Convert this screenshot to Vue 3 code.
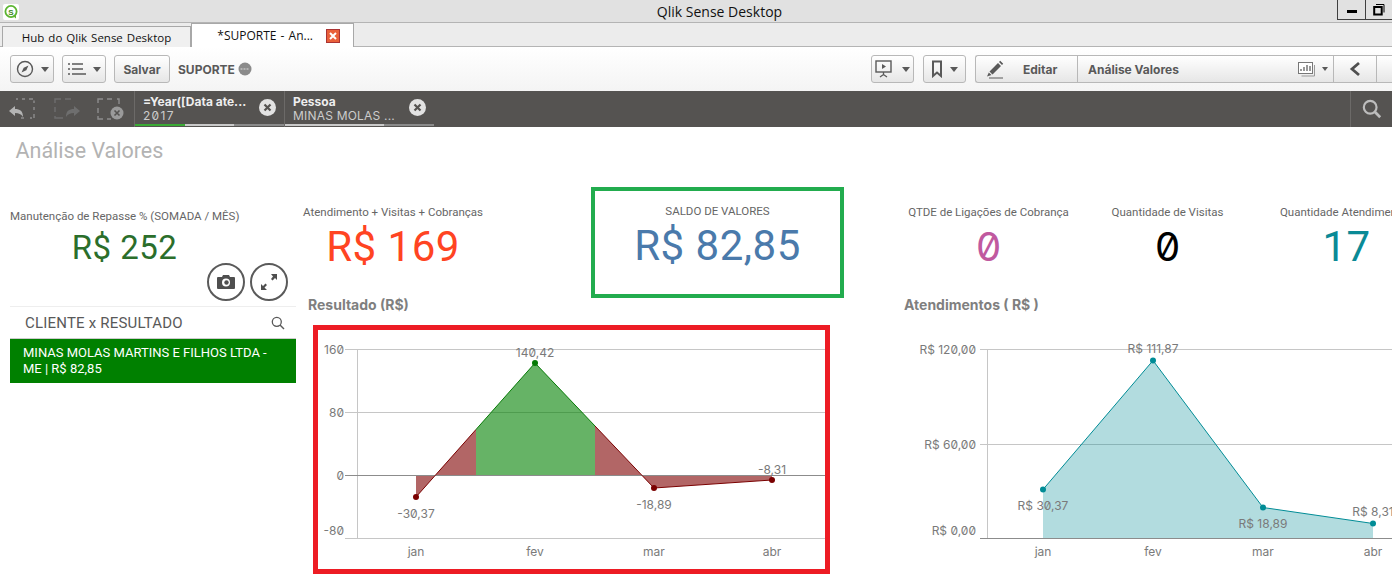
<script setup>
const tabs = [
  { label: 'Hub do Qlik Sense Desktop' },
]
const selections = [
  { name: '=Year([Data ate...', value: '2017', segs: ['#3aaa35', '#c9c9c9', '#8a8a8a'] },
  { name: 'Pessoa', value: 'MINAS MOLAS ...', segs: ['#c9c9c9', '#c9c9c9', '#8a8a8a'] },
]
const months = ['jan', 'fev', 'mar', 'abr']
const res = [
  { x: 416, y: 497, c: '#7a0000', l: '-30,37', lx: 416, ly: 518 },
  { x: 535, y: 363, c: '#067a06', l: '140,42', lx: 535, ly: 357 },
  { x: 654, y: 488, c: '#7a0000', l: '-18,89', lx: 654, ly: 509 },
  { x: 772, y: 480, c: '#7a0000', l: '-8,31', lx: 772, ly: 474 },
]
const atd = [
  { x: 1043, y: 489.5, l: 'R$ 30,37', ly: 510 },
  { x: 1153, y: 360.5, l: 'R$ 111,87', ly: 353 },
  { x: 1263, y: 507.5, l: 'R$ 18,89', ly: 528 },
  { x: 1373, y: 523.5, l: 'R$ 8,31', ly: 516 },
]
</script>

<template>
  <div class="app">
    <header class="titlebar">
      <svg class="logo" width="16" height="16" viewBox="0 0 16 16"><rect width="16" height="16" rx="2" fill="#fff"/><circle cx="8" cy="7.5" r="5.6" fill="none" stroke="#5cb531" stroke-width="1.8"/><path d="M10 12l3 2.5v-4z" fill="#5cb531"/><text x="8" y="10.5" font-size="8" font-weight="700" text-anchor="middle" fill="#3c8a1e" font-family="Liberation Sans">S</text></svg>
      <span class="wintitle">Qlik Sense Desktop</span>
      <div class="winbtns">
        <button class="winbtn"><span class="minbar"></span></button>
        <button class="winbtn"><svg width="12" height="12" viewBox="0 0 12 12"><path d="M3 .5h8v8" fill="none" stroke="#000"/><rect x="1.2" y="3" width="7.5" height="7.5" fill="none" stroke="#000" stroke-width="2"/></svg></button>
      </div>
    </header>

    <nav class="tabstrip">
      <div v-for="t in tabs" :key="t.label" class="tab">{{ t.label }}</div>
      <div class="tab active">
        <span>*SUPORTE - An...</span>
        <span class="tabclose"><svg width="12" height="12" viewBox="0 0 12 12"><path d="M3 3l6 6M9 3l-6 6" stroke="#fff" stroke-width="2"/></svg></span>
      </div>
    </nav>

    <div class="toolbar">
      <button class="tbtn w44">
        <svg width="18" height="18" viewBox="0 0 18 18"><circle cx="9" cy="9" r="7.5" fill="none" stroke="#595959" stroke-width="1.4"/><path d="M12.5 5.5L10.3 10.3 5.5 12.5 7.7 7.7z" fill="#595959"/></svg>
        <i class="caret"></i>
      </button>
      <button class="tbtn w44">
        <svg width="18" height="14" viewBox="0 0 18 14"><path d="M0 2h2M4 2h11M0 7h2M4 7h11M0 12h2M4 12h14" stroke="#595959" stroke-width="1.6"/></svg>
        <i class="caret"></i>
      </button>
      <button class="tbtn save">Salvar</button>
      <span class="appname">SUPORTE</span>
      <svg class="status" width="14" height="14" viewBox="0 0 14 14"><circle cx="7" cy="7" r="6.5" fill="#8b8b8b"/><path d="M2.5 7h9" stroke="#dcdcdc" stroke-width="1" stroke-dasharray="2 1"/></svg>

      <div class="spacer"></div>

      <button class="tbtn rb">
        <svg width="20" height="18" viewBox="0 0 20 18"><rect x="1" y="1" width="15" height="11" fill="none" stroke="#595959" stroke-width="1.4"/><path d="M7 4l4 2.5L7 9z" fill="#595959"/><path d="M8.500 12v3M5 17l3.500-2.500L12 17" fill="none" stroke="#595959" stroke-width="1.3"/></svg>
        <i class="caret"></i>
      </button>
      <button class="tbtn rb">
        <svg width="12" height="18" viewBox="0 0 12 18"><path d="M2 1.500h8V16L6 12.500 2 16z" fill="none" stroke="#595959" stroke-width="2"/></svg>
        <i class="caret"></i>
      </button>
      <div class="segments">
        <button class="seg edit">
          <svg width="18" height="19" viewBox="0 0 18 19"><path d="M3.500 11.500L12 3l3 3-8.500 8.500zM13 2l1.200-1.200 3 3L16 5zM2.800 12.500L1 16.500l4.500-1.500z" fill="#595959"/><path d="M3 18h14" stroke="#595959" stroke-width="1"/></svg>
          <span>Editar</span>
        </button>
        <button class="seg sheetsel">
          <span>Análise Valores</span>
          <span class="sheeticon">
            <svg width="18" height="15" viewBox="0 0 18 15"><rect x=".5" y=".5" width="14" height="11" fill="#fff" stroke="#777"/><path d="M3 9V7M6 9V5M9 9V3M12 9V4" stroke="#777" stroke-width="1.500"/><path d="M16.500 3v11h-13" fill="none" stroke="#999"/></svg>
            <i class="caret small"></i>
          </span>
        </button>
        <button class="seg prev"><svg width="12" height="16" viewBox="0 0 12 16"><path d="M10 2L3 8l7 6" fill="none" stroke="#4f4f4f" stroke-width="2.800"/></svg></button>
        <button class="seg next"></button>
      </div>
    </div>

    <div class="selbar">
      <div class="selactions">
        <svg width="28" height="22" viewBox="0 0 28 22"><path d="M8 1h2M14 1h3M21 1h4a1 1 0 0 1 1 1v3M26 9v3M26 16v4h-4M16 20h-3" stroke="#8d8d8d" stroke-width="1.4" fill="none" stroke-dasharray="4 2"/><path d="M1 13l6-5v3c5 0 8 2 8 8-2-3-4-4-8-4v3z" fill="#b4b4b4"/></svg>
        <svg width="28" height="22" viewBox="0 0 28 22"><path d="M2 5V1h6M12 1h6M2 9v5M2 18v2h8" stroke="#6e6e6e" stroke-width="1.400" fill="none"/><path d="M27 13l-6-5v3c-5 0-8 2-8 8 2-3 4-4 8-4v3z" fill="#6e6e6e"/></svg>
        <svg width="28" height="22" viewBox="0 0 28 22"><path d="M1 5V1h5M10 1h5M20 1h2v5M1 10v5M1 18v3h5M10 21h4" stroke="#8d8d8d" stroke-width="1.400" fill="none"/><circle cx="20" cy="15" r="6.500" fill="#9a9a9a"/><path d="M17.500 12.500l5 5M22.500 12.500l-5 5" stroke="#555351" stroke-width="1.600"/></svg>
      </div>
      <div v-for="s in selections" :key="s.name" class="selitem">
        <div class="seltext">
          <strong>{{ s.name }}</strong>
          <span class="mono">{{ s.value }}</span>
        </div>
        <span class="selclose"><svg width="17" height="17" viewBox="0 0 17 17"><circle cx="8.500" cy="8.500" r="8.500" fill="#e2e2e2"/><path d="M5.500 5.500l6 6M11.500 5.500l-6 6" stroke="#555351" stroke-width="2.200"/></svg></span>
        <div class="selprog"><i v-for="(c, i) in s.segs" :key="i" :style="{ background: c }"></i></div>
      </div>
      <div class="spacer"></div>
      <div class="selsearch">
        <svg width="20" height="20" viewBox="0 0 22 22"><circle cx="9" cy="9" r="7" fill="none" stroke="#bdbdbd" stroke-width="2.400"/><path d="M14 14l6 6" stroke="#bdbdbd" stroke-width="3"/></svg>
      </div>
    </div>

    <main class="sheet">
      <h1 class="sheettitle">Análise Valores</h1>
      <div class="board">
        <section class="left">
          <div class="kpi k-left">
            <div class="kpilabel">Manutenção de Repasse % (SOMADA / MÊS)</div>
            <div class="kpival v-small" style="color:#2b6e2b">R$ 252</div>
          </div>
          <div class="roundbtns">
            <button class="round"><svg width="18" height="14" viewBox="0 0 18 14"><path d="M1 2h4l1-2h6l1 2h4a1 1 0 0 1 1 1v10a1 1 0 0 1-1 1H1a1 1 0 0 1-1-1V3a1 1 0 0 1 1-1z" fill="#4f4f4f"/><circle cx="9" cy="7.500" r="4" fill="#fff"/><circle cx="9.500" cy="7.500" r="2.200" fill="#4f4f4f"/></svg></button>
            <button class="round"><svg width="18" height="18" viewBox="0 0 18 18"><path d="M11 1h6v6l-2-2-2.500 2.500-1.500-1.500L13 3.500zM7 17H1v-6l2 2 2.500-2.500L7 12l-2.500 2.500z" fill="#4f4f4f"/></svg></button>
          </div>
          <div class="listbox">
            <div class="listhead">
              <span>CLIENTE x RESULTADO</span>
              <svg width="14" height="14" viewBox="0 0 14 14"><circle cx="5.800" cy="5.800" r="4.500" fill="none" stroke="#595959" stroke-width="1.300"/><path d="M9 9l4 4" stroke="#595959" stroke-width="1.500"/></svg>
            </div>
            <div class="listrow">MINAS MOLAS MARTINS E FILHOS LTDA - ME | R$ 82,85</div>
          </div>
        </section>

        <section class="mid">
          <div class="midkpis">
            <div class="kpi k-atd">
              <div class="kpilabel">Atendimento + Visitas + Cobranças</div>
              <div class="kpival" style="color:#ff4422">R$ 169</div>
            </div>
            <div class="kpi k-saldo">
              <div class="kpilabel">SALDO DE VALORES</div>
              <div class="kpival" style="color:#4a7aab">R$ 82,85</div>
            </div>
          </div>
          <h2 class="charttitle t-res">Resultado (R$)</h2>
          <div class="redframe">
            <svg width="507" height="239" viewBox="318 330 507 239" class="chart">
              <g stroke="#c6c6c6" stroke-width="1">
                <path d="M345 349.500H825M345 412.500H825M345 538.500H825M357.500 349V538"/>
              </g>
              <text class="ax" x="344" y="354" text-anchor="end">160</text>
              <text class="ax" x="344" y="417" text-anchor="end">80</text>
              <text class="ax" x="344" y="480" text-anchor="end">0</text>
              <text class="ax" x="344" y="535" text-anchor="end">-80</text>
              <path d="M416 475V497L435.500 475ZM476 475V429.500L435.500 475ZM595 475V426L641.500 475ZM641.500 475L654 488 772 480V475Z" fill="#7f0000" fill-opacity=".6"/>
              <path d="M476 475V429.500L535 363 595 426V475Z" fill="#008000" fill-opacity=".6"/>
              <path d="M345 475.500H825" stroke="#8c8c8c" stroke-width="1"/>
              <path d="M416 497L476 429.500" stroke="#7a0000" fill="none"/>
              <path d="M476 429.500L535 363 595 426" stroke="#067a06" fill="none"/>
              <path d="M595 426L654 488 772 480" stroke="#7a0000" fill="none"/>
              <g v-for="p in res" :key="p.l">
                <circle :cx="p.x" :cy="p.y" r="3" :fill="p.c"/>
                <text class="ax" :x="p.lx" :y="p.ly" text-anchor="middle">{{ p.l }}</text>
              </g>
              <text v-for="(m, i) in months" :key="m" class="ax" :x="res[i].x" y="556" text-anchor="middle">{{ m }}</text>
            </svg>
          </div>
        </section>

        <section class="right">
          <div class="rightkpis">
            <div class="kpi k-r">
              <div class="kpilabel">QTDE de Ligações de Cobrança</div>
              <div class="kpival zero" style="color:#c0599f">0</div>
            </div>
            <div class="kpi k-r">
              <div class="kpilabel">Quantidade de Visitas</div>
              <div class="kpival zero" style="color:#000">0</div>
            </div>
            <div class="kpi k-r">
              <div class="kpilabel">Quantidade Atendimentos</div>
              <div class="kpival" style="color:#0a8a96">17</div>
            </div>
          </div>
          <h2 class="charttitle t-atd">Atendimentos ( R$ )</h2>
          <svg width="502" height="249" viewBox="890 325 502 249" class="chart">
            <path d="M980 349.500H1392M980 444.500H1392M987.500 349V538" stroke="#c6c6c6" fill="none"/>
            <text class="ax" x="976" y="354" text-anchor="end">R$ 120,00</text>
            <text class="ax" x="976" y="449" text-anchor="end">R$ 60,00</text>
            <text class="ax" x="976" y="535" text-anchor="end">R$ 0,00</text>
            <path d="M1043 538V489.500L1153 360.500 1263 507.500 1373 523.500V538Z" fill="#008c96" fill-opacity=".3"/>
            <path d="M980 538.500H1392" stroke="#8c8c8c"/>
            <path d="M1043 489.500L1153 360.500 1263 507.500 1373 523.500" stroke="#008c96" fill="none"/>
            <g v-for="p in atd" :key="p.l">
              <circle :cx="p.x" :cy="p.y" r="3" fill="#008c96"/>
              <text class="ax" :x="p.x" :y="p.ly" text-anchor="middle">{{ p.l }}</text>
            </g>
            <text v-for="(m, i) in months" :key="m" class="ax" :x="atd[i].x" y="556" text-anchor="middle">{{ m }}</text>
          </svg>
        </section>
      </div>
    </main>
  </div>
</template>

<style>
html, body { margin: 0; overflow: hidden; background: #fff; }
</style>

<style scoped>
.app { width: 1392px; height: 574px; overflow: hidden; display: flex; flex-direction: column; font-family: Inter, "Noto Sans", sans-serif; font-feature-settings: "zero"; color: #595959; background: #fff; }
button { font: inherit; padding: 0; background: none; border: 0; color: inherit; }
h1, h2 { margin: 0; }
.spacer { flex: 1; }

.titlebar { height: 22px; border-bottom: 1px solid #b4b4b4; background: #e1e1e1; display: flex; align-items: flex-start; justify-content: center; position: relative; box-sizing: content-box; }
.logo { position: absolute; left: 3px; top: 4px; }
.wintitle { font: 14px/24px "Open Sans", sans-serif; color: #111; margin-left: 47px; }
.winbtns { position: absolute; right: 0; top: 0; display: flex; height: 19px; border: 1px solid #404040; border-top: 0; border-right: 0; }
.winbtn { width: 27px; display: flex; align-items: center; justify-content: center; }
.winbtn + .winbtn { border-left: 1px solid #404040; }
.minbar { width: 10px; height: 3px; background: #000; margin-top: 4px; }

.tabstrip { height: 23px; background: #ececec; border-bottom: 1px solid #b4b4b4; display: flex; align-items: flex-end; padding-left: 2px; }
.tab { height: 21px; width: 189px; box-sizing: border-box; border: 1px solid #a8a8a8; border-bottom: 0; background: #f0f0f0; font: 11.5px/21px "Open Sans", sans-serif; word-spacing: 1px; color: #111; text-align: center; margin-bottom: -1px; padding-right: 0; }
.tab.active { width: 163px; height: 24px; font-size: 12px; background: #fff; border-bottom: 0; display: flex; align-items: center; justify-content: flex-end; gap: 13px; padding-right: 13px; position: relative; z-index: 1; }
.tabclose { width: 14px; height: 14px; background: #e9603a; border: 1px solid #a33; box-sizing: border-box; display: flex; align-items: center; justify-content: center; }

.toolbar { height: 44px; box-sizing: border-box; display: flex; align-items: center; padding-left: 10px; background: linear-gradient(#fff, #f4f4f4); }
.tbtn { height: 28px; box-sizing: border-box; border: 1px solid #b8b8b8; border-radius: 3px; background: linear-gradient(#fff, #e6e6e6); display: flex; align-items: center; justify-content: center; gap: 7px; margin-right: 8px; }
.w44 { width: 44px; }
.rb { width: 43px; margin-right: 9px; }
.save { width: 56px; font-size: 12px; font-weight: 700; color: #595959; }
.caret { width: 0; height: 0; border: 4px solid transparent; border-top: 5px solid #595959; border-bottom: 0; }
.caret.small { border-width: 3.5px; border-top-width: 4px; border-bottom: 0; }
.appname { font-size: 12px; font-weight: 700; }
.status { margin-left: 3px; }
.segments { display: flex; height: 28px; box-sizing: border-box; border: 1px solid #b8b8b8; border-right: 0; border-radius: 3px 0 0 3px; background: linear-gradient(#fff, #e6e6e6); width: 417px; }
.seg { font-size: 12px; font-weight: 700; display: flex; align-items: center; border-right: 1px solid #b8b8b8; box-sizing: border-box; height: 100%; }
.edit { width: 102px; padding-left: 10px; gap: 19px; }
.sheetsel { width: 256px; padding: 0 5px 0 10px; justify-content: space-between; }
.sheeticon { display: flex; align-items: center; gap: 6px; }
.prev { width: 43px; justify-content: center; }
.next { flex: 1; border-right: 0; }

.selbar { height: 36px; background: #555351; display: flex; align-items: stretch; flex: none; }
.selactions { display: flex; align-items: center; gap: 16.5px; padding-left: 8px; width: 134px; box-sizing: border-box; }
.selitem { width: 150px; box-sizing: border-box; border-left: 1px solid #6c6a68; position: relative; padding: 4px 0 0 8px; color: #e6e6e6; display: flex; }
.seltext { display: flex; flex-direction: column; font-size: 12px; line-height: 14px; width: 115px; white-space: nowrap; }
.seltext strong { font-weight: 700; color: #eee; }
.mono { color: #ccc; letter-spacing: .2px; }
.selitem:nth-child(2) .mono { letter-spacing: 1.3px; }
.selclose { margin: 4px 0 0 1px; }
.selprog { position: absolute; left: 0; right: 0; bottom: 1px; height: 2px; display: flex; }
.selprog i { flex: 1; }
.selsearch { width: 42px; box-sizing: border-box; border-left: 1px solid #6c6a68; display: flex; align-items: center; justify-content: center; }

.sheet { flex: 1; min-height: 0; }
.sheettitle { font-family: Roboto, sans-serif; font-size: 21.5px; font-weight: 400; color: #b3b3b3; line-height: 28px; padding: 10px 0 0 15.5px; height: 51px; box-sizing: content-box; }
.board { display: flex; padding-left: 10px; }
.left { width: 286px; flex: none; padding-top: 21px; }
.mid { width: 594px; flex: none; }
.right { width: 502px; flex: none; }

.kpi { text-align: center; white-space: nowrap; }
.kpilabel { font-family: Roboto, sans-serif; font-size: 11.5px; line-height: 14px; color: #666; margin-bottom: 1px; }
.kpival { font-family: Roboto, sans-serif; font-size: 42px; line-height: 54px; letter-spacing: .5px; }
.kpival.zero { font-family: Inter, sans-serif; font-size: 40px; letter-spacing: 0; }
.v-small { font-size: 33px; line-height: 48px; }
.k-left { width: 229px; }

.roundbtns { display: flex; justify-content: flex-end; gap: 5px; margin-top: -9px; margin-right: 8px; }
.round { width: 38px; height: 38px; box-sizing: border-box; border: 2px solid #5a5a5a; border-radius: 50%; display: flex; align-items: center; justify-content: center; background: #fff; }

.listbox { margin-top: 5px; }
.listhead { height: 33px; border-top: 1px solid #eee; border-bottom: 1px solid #ccc; display: flex; align-items: center; justify-content: space-between; padding: 0 11px 0 15px; font-family: Roboto, sans-serif; font-size: 15px; letter-spacing: .2px; color: #595959; box-sizing: border-box; }
.listrow { font-family: Roboto, sans-serif; background: #008000; color: #fff; font-size: 13px; line-height: 16px; padding: 6px 13px 7px; height: 44px; box-sizing: border-box; }

.midkpis { display: flex; align-items: flex-start; height: 110px; margin-top: -1px; }
.k-atd { width: 194px; padding-top: 18px; }
.k-saldo { width: 253px; height: 111px; box-sizing: border-box; border: 4px solid #22ac4e; margin-left: 101px; padding-top: 13px; }
.charttitle { font-size: 14px; font-weight: 700; color: #7f7f7f; line-height: 18px; margin-top: -1px; height: 29px; }
.t-res { padding: 0 0 0 12px; }
.redframe { width: 517px; height: 249px; box-sizing: border-box; border: 5px solid #ed1c24; margin-left: 17px; flex: none; }
.chart { display: block; }
.ax { font-size: 12px; fill: #7a7a7a; }

.rightkpis { display: flex; height: 110px; margin-top: -1px; padding: 18px 0 0 9px; box-sizing: border-box; }
.k-r { width: 179px; flex: none; }
.t-atd { padding-left: 14px; }
</style>
